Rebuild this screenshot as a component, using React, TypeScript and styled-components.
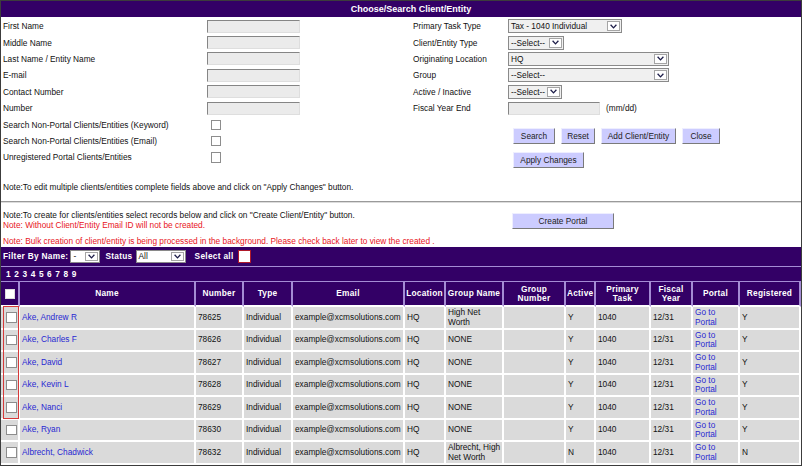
import React from "react";
import styled, { createGlobalStyle } from "styled-components";

const PURPLE = "#330066";
const LAVENDER = "#a48cd4";

const Global = createGlobalStyle`
  html, body { margin: 0; padding: 0; background: #fff; }
  body { font-family: "Liberation Sans", Arial, sans-serif; }
`;

const Frame = styled.div`
  position: relative;
  box-sizing: border-box;
  width: 802px;
  height: 466px;
  border: 1px solid #3c3c3c;
  overflow: hidden;
  background: #fff;
  font-family: "Liberation Sans", Arial, sans-serif;
  font-size: 8.3px;
  line-height: 10px;
  color: #111;
`;

const TitleBar = styled.div`
  height: 16px;
  background: ${PURPLE};
  color: #fff;
  font-weight: bold;
  font-size: 9px;
  display: flex;
  align-items: center;
  justify-content: center;
  padding-left: 20px;
`;

const FormArea = styled.div`
  display: grid;
  grid-template-columns: 399px 1fr;
  padding-top: 1px;
`;

const Column = styled.div<{ $indent: number }>`
  display: flex;
  flex-direction: column;
  padding-left: ${(p) => p.$indent}px;
`;

const FieldList = styled.div`
  display: grid;
  grid-auto-rows: 16.4px;
`;

const FieldRow = styled.div<{ $labelWidth: number }>`
  display: grid;
  grid-template-columns: ${(p) => p.$labelWidth}px 1fr;
  align-items: center;
`;

const Label = styled.span`
  white-space: nowrap;
`;

const TextBox = styled.input`
  box-sizing: border-box;
  width: ${(p) => p.width ?? 93}px;
  height: 13px;
  margin: 0;
  padding: 0 2px;
  background: #ebebeb;
  border-style: solid;
  border-width: 1px;
  border-color: #858585 #dedede #dedede #858585;
  font: inherit;
  outline: none;
`;

const Check = styled.span<{ $size?: number; $border?: string; $offset?: number }>`
  display: inline-block;
  box-sizing: border-box;
  width: ${(p) => p.$size ?? 10.5}px;
  height: ${(p) => p.$size ?? 10.5}px;
  margin-left: ${(p) => p.$offset ?? 0}px;
  background: #fff;
  border: 1px solid ${(p) => p.$border ?? "#8d8d8d"};
  vertical-align: middle;
`;

const SelectBox = styled.div<{ $w: number; $h?: number; $bg?: string }>`
  box-sizing: border-box;
  width: ${(p) => p.$w}px;
  height: ${(p) => p.$h ?? 14}px;
  display: flex;
  align-items: center;
  background: ${(p) => p.$bg ?? "#f0f0f0"};
  border: 1px solid #8a8a8a;
  color: #111;
  font-weight: normal;
  letter-spacing: 0;
  padding-left: 2px;
  white-space: nowrap;
`;

const ArrowBox = styled.span`
  box-sizing: border-box;
  margin-left: auto;
  margin-right: 1px;
  width: 13px;
  height: calc(100% - 2px);
  display: flex;
  align-items: center;
  justify-content: center;
  background: #fff;
  border: 1px solid #a5a5a5;
`;

const Chevron = () => (
  <svg width="7" height="5" viewBox="0 0 7 5">
    <polyline points="0.6,0.8 3.5,3.9 6.4,0.8" fill="none" stroke="#1c1c48" strokeWidth="1.3" />
  </svg>
);

const Select = ({ w, h, bg, text }: { w: number; h?: number; bg?: string; text: string }) => (
  <SelectBox $w={w} $h={h} $bg={bg}>
    <span>{text}</span>
    <ArrowBox>
      <Chevron />
    </ArrowBox>
  </SelectBox>
);

const Inline = styled.div`
  display: flex;
  align-items: center;
  gap: 6px;
`;

const ButtonBlock = styled.div`
  display: flex;
  flex-direction: column;
  gap: 8px;
  padding: 11.6px 0 0 100px;
`;

const ButtonRow = styled.div`
  display: flex;
  gap: 6px;
`;

const Button = styled.button<{ $w: number }>`
  box-sizing: border-box;
  width: ${(p) => p.$w}px;
  height: 16px;
  margin: 0;
  padding: 0;
  background: #ccccff;
  border-style: solid;
  border-width: 1px;
  border-color: #eeeeff #7a7a7a #7a7a7a #eeeeff;
  color: #222;
  font: inherit;
  white-space: nowrap;
`;

const EditNote = styled.div`
  margin-top: 14px;
  padding-left: 2px;
`;

const Divider = styled.div`
  margin-top: 9px;
  border-top: 1px solid #9a9a9a;
  border-bottom: 1px solid #dcdcdc;
`;

const CreateSection = styled.div`
  display: grid;
  grid-template-columns: 511px 1fr;
  padding-top: 7px;
  height: 37px;
`;

const NoteStack = styled.div`
  display: flex;
  flex-direction: column;
  padding-left: 2px;
  white-space: nowrap;
`;

const NoteLine = styled.div<{ $red?: boolean; $gap?: number }>`
  color: ${(p) => (p.$red ? "#e8141c" : "#111")};
  margin-top: ${(p) => p.$gap ?? 0}px;
`;

const ButtonSlot = styled.div`
  padding-top: 3px;
`;

const FilterBar = styled.div`
  height: 19px;
  display: flex;
  align-items: center;
  padding-left: 2px;
  background: ${PURPLE};
  border-bottom: 1px solid ${LAVENDER};
  color: #fff;
  font-weight: bold;
  letter-spacing: 0.3px;
`;

const FilterItem = styled.span<{ $gap: number }>`
  margin-left: ${(p) => p.$gap}px;
  display: inline-flex;
  align-items: center;
`;

const Pager = styled.div`
  height: 14px;
  display: flex;
  align-items: center;
  padding-left: 5px;
  background: ${PURPLE};
  color: #fff;
  font-weight: bold;
`;

const PageLink = styled.span`
  margin-right: 3.6px;
`;

const Table = styled.table`
  width: 800px;
  table-layout: fixed;
  border-collapse: separate;
  border-spacing: 0;
  font-size: 8.3px;
`;

const Th = styled.th<{ $w: number }>`
  box-sizing: border-box;
  width: ${(p) => p.$w}px;
  height: 26.5px;
  padding: 1px 1px 0;
  background: ${PURPLE};
  color: #fff;
  font-weight: bold;
  letter-spacing: 0.25px;
  text-align: center;
  vertical-align: middle;
  line-height: 9.5px;
  border-top: 1px solid ${LAVENDER};
  border-right: 2px solid ${LAVENDER};
  border-bottom: 2px solid #fff;
`;

const Td = styled.td<{ $pad?: number }>`
  box-sizing: border-box;
  height: 22.5px;
  padding: 0 1px 0 ${(p) => p.$pad ?? 2}px;
  background: #dadada;
  color: #111;
  vertical-align: middle;
  line-height: 9.5px;
  border-right: 2px solid #fff;
  border-bottom: 2px solid #fff;
`;

const Link = styled.a`
  color: #2828d2;
  text-decoration: none;
`;

const Annotation = styled.div`
  position: absolute;
  left: 2px;
  top: 305px;
  width: 16px;
  height: 113px;
  box-sizing: border-box;
  border: 1.5px solid #d63a3a;
  pointer-events: none;
`;

const leftFields: { label: string; kind: "text" | "check" }[] = [
  { label: "First Name", kind: "text" },
  { label: "Middle Name", kind: "text" },
  { label: "Last Name / Entity Name", kind: "text" },
  { label: "E-mail", kind: "text" },
  { label: "Contact Number", kind: "text" },
  { label: "Number", kind: "text" },
  { label: "Search Non-Portal Clients/Entities (Keyword)", kind: "check" },
  { label: "Search Non-Portal Clients/Entities (Email)", kind: "check" },
  { label: "Unregistered Portal Clients/Entities", kind: "check" },
];

const columns = [
  { w: 19, label: "" },
  { w: 176, label: "Name" },
  { w: 48, label: "Number" },
  { w: 49, label: "Type" },
  { w: 112, label: "Email" },
  { w: 41, label: "Location" },
  { w: 58, label: "Group Name" },
  { w: 62, label: "Group Number" },
  { w: 30, label: "Active" },
  { w: 55, label: "Primary Task" },
  { w: 42, label: "Fiscal Year" },
  { w: 47, label: "Portal" },
  { w: 61, label: "Registered" },
];

const rows = [
  { name: "Ake, Andrew R", num: "78625", group: "High Net Worth", active: "Y", reg: "Y" },
  { name: "Ake, Charles F", num: "78626", group: "NONE", active: "Y", reg: "Y" },
  { name: "Ake, David", num: "78627", group: "NONE", active: "Y", reg: "Y" },
  { name: "Ake, Kevin L", num: "78628", group: "NONE", active: "Y", reg: "Y" },
  { name: "Ake, Nanci", num: "78629", group: "NONE", active: "Y", reg: "Y" },
  { name: "Ake, Ryan", num: "78630", group: "NONE", active: "Y", reg: "Y" },
  { name: "Albrecht, Chadwick", num: "78632", group: "Albrecht, High Net Worth", active: "N", reg: "N" },
];

export default function App() {
  return (
    <>
      <Global />
      <Frame>
        <TitleBar>Choose/Search Client/Entity</TitleBar>
        <FormArea>
          <Column $indent={2}>
            <FieldList>
              {leftFields.map((f) => (
                <FieldRow key={f.label} $labelWidth={204}>
                  <Label>{f.label}</Label>
                  <div>{f.kind === "text" ? <TextBox readOnly /> : <Check $offset={3.5} />}</div>
                </FieldRow>
              ))}
            </FieldList>
          </Column>
          <Column $indent={13}>
            <FieldList>
              <FieldRow $labelWidth={95}>
                <Label>Primary Task Type</Label>
                <Select w={114} text="Tax - 1040 Individual" />
              </FieldRow>
              <FieldRow $labelWidth={95}>
                <Label>Client/Entity Type</Label>
                <Select w={56} text="--Select--" />
              </FieldRow>
              <FieldRow $labelWidth={95}>
                <Label>Originating Location</Label>
                <Select w={161} text="HQ" />
              </FieldRow>
              <FieldRow $labelWidth={95}>
                <Label>Group</Label>
                <Select w={161} text="--Select--" />
              </FieldRow>
              <FieldRow $labelWidth={95}>
                <Label>Active / Inactive</Label>
                <Select w={54} text="--Select--" />
              </FieldRow>
              <FieldRow $labelWidth={95}>
                <Label>Fiscal Year End</Label>
                <Inline>
                  <TextBox readOnly width={92} />
                  <span>(mm/dd)</span>
                </Inline>
              </FieldRow>
            </FieldList>
            <ButtonBlock>
              <ButtonRow>
                <Button $w={42}>Search</Button>
                <Button $w={34}>Reset</Button>
                <Button $w={75}>Add Client/Entity</Button>
                <Button $w={38}>Close</Button>
              </ButtonRow>
              <ButtonRow>
                <Button $w={71}>Apply Changes</Button>
              </ButtonRow>
            </ButtonBlock>
          </Column>
        </FormArea>

        <EditNote>Note:To edit multiple clients/entities complete fields above and click on "Apply Changes" button.</EditNote>
        <Divider />

        <CreateSection>
          <NoteStack>
            <NoteLine>Note:To create for clients/entities select records below and click on "Create Client/Entity" button.</NoteLine>
            <NoteLine $red>Note: Without Client/Entity Email ID will not be created.</NoteLine>
            <NoteLine $red $gap={6}>
              Note: Bulk creation of client/entity is being processed in the background. Please check back later to view the created .
            </NoteLine>
          </NoteStack>
          <ButtonSlot>
            <Button $w={102}>Create Portal</Button>
          </ButtonSlot>
        </CreateSection>

        <FilterBar>
          <span>Filter By Name:</span>
          <FilterItem $gap={2}>
            <Select w={30} h={13} bg="#fff" text="-" />
          </FilterItem>
          <FilterItem $gap={5}>Status</FilterItem>
          <FilterItem $gap={3}>
            <Select w={50} h={13} bg="#fff" text="All" />
          </FilterItem>
          <FilterItem $gap={9}>Select all</FilterItem>
          <FilterItem $gap={4}>
            <Check $size={13} $border="#b01a2a" />
          </FilterItem>
        </FilterBar>
        <Pager>
          {[1, 2, 3, 4, 5, 6, 7, 8, 9].map((n) => (
            <PageLink key={n}>{n}</PageLink>
          ))}
        </Pager>

        <Table>
          <thead>
            <tr>
              {columns.map((c, i) => (
                <Th key={i} $w={c.w}>
                  {i === 0 ? <Check $size={10} $border="#ddd" /> : c.label}
                </Th>
              ))}
            </tr>
          </thead>
          <tbody>
            {rows.map((r) => (
              <tr key={r.num}>
                <Td $pad={5}>
                  <Check />
                </Td>
                <Td>
                  <Link>{r.name}</Link>
                </Td>
                <Td>{r.num}</Td>
                <Td>Individual</Td>
                <Td>example@xcmsolutions.com</Td>
                <Td>HQ</Td>
                <Td>{r.group}</Td>
                <Td></Td>
                <Td>{r.active}</Td>
                <Td>1040</Td>
                <Td>12/31</Td>
                <Td>
                  <Link>Go to Portal</Link>
                </Td>
                <Td>{r.reg}</Td>
              </tr>
            ))}
          </tbody>
        </Table>
        <Annotation />
      </Frame>
    </>
  );
}
